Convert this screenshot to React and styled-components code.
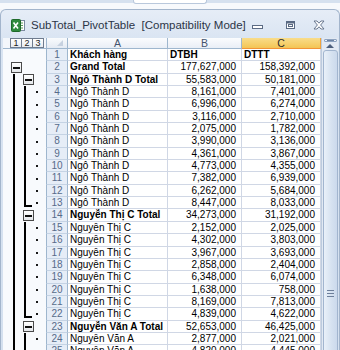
import styled, { createGlobalStyle } from "styled-components";

const GlobalStyle = createGlobalStyle`
  html, body {
    margin: 0;
    padding: 0;
    background: #ffffff;
  }
  body {
    width: 340px;
    height: 350px;
    overflow: hidden;
    font-family: "Liberation Sans", Arial, sans-serif;
  }
`;

const ROW_H = 12.35;

const rows = [
  { n: 1, a: "Khách hàng", b: "DTBH", c: "DTTT", kind: "head" },
  { n: 2, a: "Grand Total", b: "177,627,000", c: "158,392,000", kind: "grand" },
  { n: 3, a: "Ngô Thành D Total", b: "55,583,000", c: "50,181,000", kind: "total" },
  { n: 4, a: "Ngô Thành D", b: "8,161,000", c: "7,401,000" },
  { n: 5, a: "Ngô Thành D", b: "6,996,000", c: "6,274,000" },
  { n: 6, a: "Ngô Thành D", b: "3,116,000", c: "2,710,000" },
  { n: 7, a: "Ngô Thành D", b: "2,075,000", c: "1,782,000" },
  { n: 8, a: "Ngô Thành D", b: "3,990,000", c: "3,136,000" },
  { n: 9, a: "Ngô Thành D", b: "4,361,000", c: "3,867,000" },
  { n: 10, a: "Ngô Thành D", b: "4,773,000", c: "4,355,000" },
  { n: 11, a: "Ngô Thành D", b: "7,382,000", c: "6,939,000" },
  { n: 12, a: "Ngô Thành D", b: "6,262,000", c: "5,684,000" },
  { n: 13, a: "Ngô Thành D", b: "8,447,000", c: "8,033,000", foot: true },
  { n: 14, a: "Nguyễn Thị C Total", b: "34,273,000", c: "31,192,000", kind: "total" },
  { n: 15, a: "Nguyễn Thị C", b: "2,152,000", c: "2,025,000" },
  { n: 16, a: "Nguyễn Thị C", b: "4,302,000", c: "3,803,000" },
  { n: 17, a: "Nguyễn Thị C", b: "3,967,000", c: "3,693,000" },
  { n: 18, a: "Nguyễn Thị C", b: "2,858,000", c: "2,404,000" },
  { n: 19, a: "Nguyễn Thị C", b: "6,348,000", c: "6,074,000" },
  { n: 20, a: "Nguyễn Thị C", b: "1,638,000", c: "758,000" },
  { n: 21, a: "Nguyễn Thị C", b: "8,169,000", c: "7,813,000" },
  { n: 22, a: "Nguyễn Thị C", b: "4,839,000", c: "4,622,000", foot: true },
  { n: 23, a: "Nguyễn Văn A Total", b: "52,653,000", c: "46,425,000", kind: "total" },
  { n: 24, a: "Nguyễn Văn A", b: "2,877,000", c: "2,021,000" },
  { n: 25, a: "Nguyễn Văn A", b: "4,820,000", c: "4,445,000" },
];

const Screen = styled.div`
  width: 340px;
  height: 350px;
  display: flex;
  flex-direction: column;
  overflow: hidden;
  background: #f2f5fa;
`;

const TopStrip = styled.div`
  height: 9px;
  flex: none;
  display: flex;
  box-sizing: border-box;
  border-top: 3px solid #d6e1ef;
  background: #f7f9fc;
`;

const Tab = styled.div`
  margin-left: 133px;
  width: 72px;
  height: 3px;
  margin-top: -3px;
  background: #ffffff;
  border: 1px solid #b9c8dc;
  border-top: none;
  border-radius: 0 0 3px 3px;
`;

const Window = styled.div`
  flex: 1;
  display: flex;
  flex-direction: column;
  min-height: 0;
  box-sizing: border-box;
  border: 1px solid #a3b5cc;
  border-bottom: none;
  border-radius: 6px 6px 0 0;
  background: linear-gradient(#e6edf7, #d9e4f2 30px, #d4e0ef);
`;

const TitleBar = styled.div`
  height: 28px;
  flex: none;
  display: flex;
  align-items: center;
  padding: 2px 14px 0 10px;
  box-sizing: border-box;
`;

const Title = styled.span`
  margin-left: 6px;
  font-family: "Liberation Sans", Arial, sans-serif;
  font-size: 11.5px;
  color: #2c3547;
  white-space: pre;
`;

const Controls = styled.div`
  margin-left: auto;
  display: flex;
  align-items: center;
  color: #5b6b84;
`;

const ControlSlot = styled.div`
  display: flex;
  margin-left: ${({ gap }) => gap}px;
`;

const Sheet = styled.div`
  flex: 1;
  min-height: 0;
  display: flex;
  margin: 0 1px 0 2px;
  overflow: hidden;
`;

const Grid = styled.div`
  flex: 1;
  display: flex;
  flex-direction: column;
  background: #ffffff;
`;

const HeaderRow = styled.div`
  height: 11px;
  flex: none;
  display: flex;
  box-sizing: border-box;
  border-bottom: 1px solid #9eb6ce;
  background: #f3f6fb;
`;

const LevelBar = styled.div`
  width: 43px;
  flex: none;
  display: flex;
  padding-left: 7px;
  box-sizing: border-box;
  background: #f3f6fb;
`;

const LevelButton = styled.div`
  width: 12px;
  height: 10px;
  box-sizing: border-box;
  border: 1px solid #6f7c8f;
  margin-left: -1px;
  background: linear-gradient(#ffffff, #e7ebf1);
  font-size: 9px;
  line-height: 8px;
  text-align: center;
  color: #1d1d1d;
  &:first-child {
    margin-left: 0;
  }
`;

const Corner = styled.div`
  width: 22px;
  flex: none;
  display: flex;
  justify-content: flex-end;
  align-items: flex-end;
  padding: 0 4px 2px 0;
  box-sizing: border-box;
  border-left: 1px solid #9eb6ce;
  border-right: 1px solid #9eb6ce;
  background: linear-gradient(#f9fbfd, #e4eaf3);
`;

const Triangle = styled.div`
  width: 0;
  height: 0;
  border-left: 6px solid transparent;
  border-bottom: 6px solid #c6d1e0;
`;

const ColHead = styled.div`
  width: ${({ w }) => (w ? `${w}px` : "auto")};
  flex: ${({ w }) => (w ? "none" : "1")};
  box-sizing: border-box;
  border-right: 1px solid ${({ active }) => (active ? "#f0a33c" : "#9eb6ce")};
  border-bottom: ${({ active }) => (active ? "1px solid #f29436" : "none")};
  margin-bottom: ${({ active }) => (active ? "-1px" : "0")};
  background: ${({ active }) =>
    active
      ? "linear-gradient(#f9dc8a, #f6cf6a 60%, #f3c555)"
      : "linear-gradient(#fbfcfe, #e9eef6)"};
  font-size: 10.5px;
  line-height: 11px;
  text-align: center;
  color: ${({ active }) => (active ? "#2d2d2d" : "#44546e")};
`;

const Row = styled.div`
  height: ${ROW_H}px;
  flex: none;
  display: flex;
`;

const Outline = styled.div`
  width: 43px;
  flex: none;
  display: flex;
  padding-left: 7px;
  box-sizing: border-box;
  background: #f8fafd;
`;

const Slot = styled.div`
  width: 11px;
  flex: none;
  display: flex;
  align-items: center;
  padding-left: ${({ pad }) => pad}px;
  box-sizing: border-box;
`;

const VBar = styled.div`
  width: 2px;
  align-self: stretch;
  margin-left: 2px;
  background: #000000;
`;

const Foot = styled.div`
  width: 6px;
  height: 62%;
  align-self: flex-start;
  margin-left: 2px;
  border-left: 2px solid #000000;
  border-bottom: 2px solid #000000;
`;

const MinusBox = styled.div`
  width: 11px;
  height: 11px;
  flex: none;
  display: flex;
  align-items: center;
  justify-content: center;
  box-sizing: border-box;
  border: 1px solid #4a4a4a;
  background: linear-gradient(#ffffff, #e3e6ea);
`;

const MinusBar = styled.div`
  width: 7px;
  height: 2px;
  background: #111111;
`;

const Dot = styled.div`
  width: 2px;
  height: 2px;
  margin-left: 4px;
  background: #1a1a1a;
`;

const RowNum = styled.div`
  width: 22px;
  flex: none;
  box-sizing: border-box;
  border-left: 1px solid #9eb6ce;
  border-right: 1px solid #9eb6ce;
  border-bottom: 1px solid #c5d3e4;
  background: #e6edf7;
  font-size: 10px;
  line-height: ${ROW_H - 1}px;
  text-align: center;
  color: #566b8a;
`;

const Cell = styled.div`
  width: ${({ w }) => (w ? `${w}px` : "auto")};
  flex: ${({ w }) => (w ? "none" : "1")};
  box-sizing: border-box;
  border-right: 1px solid #d0d7e5;
  border-bottom: 1px solid #d0d7e5;
  padding: ${({ num }) => (num ? "0 5px 0 0" : "0 0 0 2px")};
  text-align: ${({ num }) => (num ? "right" : "left")};
  font-size: 10px;
  line-height: ${ROW_H - 1}px;
  font-weight: ${({ bold }) => (bold ? 700 : 400)};
  color: #000000;
  white-space: nowrap;
  overflow: hidden;
`;

const ScrollBar = styled.div`
  width: 17px;
  flex: none;
  display: flex;
  flex-direction: column;
  align-items: center;
  box-sizing: border-box;
  border-left: 1px solid #bccbde;
  background: #e2e9f3;
`;

const SplitBox = styled.div`
  width: 13px;
  height: 7px;
  margin-top: 1px;
  box-sizing: border-box;
  border: 1px solid #8ea3c0;
  border-radius: 1px;
  background: linear-gradient(#ffffff, #dde6f2);
  display: flex;
  align-items: center;
  justify-content: center;
`;

const SplitLine = styled.div`
  width: 7px;
  height: 1px;
  background: #6e83a3;
`;

const UpButton = styled.div`
  width: 15px;
  height: 11px;
  margin-top: 2px;
  display: flex;
  align-items: center;
  justify-content: center;
`;

const UpArrow = styled.div`
  width: 0;
  height: 0;
  border-left: 4px solid transparent;
  border-right: 4px solid transparent;
  border-bottom: 4px solid #4d5f7c;
`;

const Thumb = styled.div`
  width: 15px;
  height: 486px;
  flex: none;
  margin-top: 2px;
  box-sizing: border-box;
  border: 1px solid #a2b5cf;
  border-radius: 3px;
  background: linear-gradient(90deg, #e9f0f9, #d5e1f0 60%, #cbd9ec);
  display: flex;
  flex-direction: column;
  align-items: center;
  justify-content: center;
  gap: 2px;
`;

const GripLine = styled.div`
  width: 7px;
  height: 1px;
  background: #6d7f9b;
`;

function ExcelIcon() {
  return (
    <svg width="14" height="13" viewBox="0 0 14 13">
      <rect x="5.5" y="1.5" width="8" height="10" fill="#ffffff" stroke="#7a8a9e" />
      <line x1="8" y1="4" x2="12" y2="4" stroke="#5a9a5a" />
      <line x1="8" y1="6.5" x2="12" y2="6.5" stroke="#5a9a5a" />
      <line x1="8" y1="9" x2="12" y2="9" stroke="#5a9a5a" />
      <rect x="0.5" y="0.5" width="9" height="12" rx="1" fill="#2f8a3d" stroke="#1f6a2b" />
      <path d="M2.5 3.5 L7 9.5 M7 3.5 L2.5 9.5" stroke="#ffffff" strokeWidth="1.6" />
    </svg>
  );
}

function MinimizeIcon() {
  return (
    <svg width="11" height="10" viewBox="0 0 11 10">
      <rect x="0.5" y="5.5" width="10" height="3" fill="#ffffff" stroke="currentColor" />
    </svg>
  );
}

function RestoreIcon() {
  return (
    <svg width="11" height="10" viewBox="0 0 11 10">
      <rect x="1.5" y="1.5" width="8" height="7" fill="#ffffff" stroke="currentColor" />
      <rect x="1.5" y="1.5" width="8" height="2" fill="currentColor" />
      <rect x="3.5" y="4.5" width="4" height="2" fill="none" stroke="currentColor" />
    </svg>
  );
}

function CloseIcon() {
  return (
    <svg width="12" height="10" viewBox="0 0 12 10">
      <path
        d="M1 1 L4 1 L6 3.2 L8 1 L11 1 L7.6 5 L11 9 L8 9 L6 6.8 L4 9 L1 9 L4.4 5 Z"
        fill="#ffffff"
        stroke="currentColor"
        strokeWidth="0.9"
      />
    </svg>
  );
}

function OutlineMarks({ row }) {
  if (row.kind === "head") return <Outline />;
  if (row.kind === "grand") {
    return (
      <Outline>
        <Slot pad={1}>
          <MinusBox>
            <MinusBar />
          </MinusBox>
        </Slot>
      </Outline>
    );
  }
  if (row.kind === "total") {
    return (
      <Outline>
        <Slot pad={1}>
          <VBar />
        </Slot>
        <Slot pad={2}>
          <MinusBox>
            <MinusBar />
          </MinusBox>
        </Slot>
      </Outline>
    );
  }
  return (
    <Outline>
      <Slot pad={1}>
        <VBar />
      </Slot>
      <Slot pad={1}>{row.foot ? <Foot /> : <VBar />}</Slot>
      <Slot pad={0}>
        <Dot />
      </Slot>
    </Outline>
  );
}

export default function App() {
  return (
    <Screen>
      <GlobalStyle />
      <TopStrip>
        <Tab />
      </TopStrip>
      <Window>
        <TitleBar>
          <ExcelIcon />
          <Title>SubTotal_PivotTable  [Compatibility Mode]</Title>
          <Controls>
            <ControlSlot gap={0}>
              <MinimizeIcon />
            </ControlSlot>
            <ControlSlot gap={22}>
              <RestoreIcon />
            </ControlSlot>
            <ControlSlot gap={17}>
              <CloseIcon />
            </ControlSlot>
          </Controls>
        </TitleBar>
        <Sheet>
          <Grid>
            <HeaderRow>
              <LevelBar>
                <LevelButton>1</LevelButton>
                <LevelButton>2</LevelButton>
                <LevelButton>3</LevelButton>
              </LevelBar>
              <Corner>
                <Triangle />
              </Corner>
              <ColHead w={100}>A</ColHead>
              <ColHead w={74}>B</ColHead>
              <ColHead active>C</ColHead>
            </HeaderRow>
            {rows.map((row) => {
              const strong = row.kind === "head";
              const labelBold = row.kind !== undefined;
              return (
                <Row key={row.n}>
                  <OutlineMarks row={row} />
                  <RowNum>{row.n}</RowNum>
                  <Cell w={100} bold={labelBold}>
                    {row.a}
                  </Cell>
                  <Cell w={74} num={!strong} bold={strong}>
                    {row.b}
                  </Cell>
                  <Cell num={!strong} bold={strong}>
                    {row.c}
                  </Cell>
                </Row>
              );
            })}
          </Grid>
          <ScrollBar>
            <SplitBox>
              <SplitLine />
            </SplitBox>
            <UpButton>
              <UpArrow />
            </UpButton>
            <Thumb>
              <GripLine />
              <GripLine />
              <GripLine />
            </Thumb>
          </ScrollBar>
        </Sheet>
      </Window>
    </Screen>
  );
}
